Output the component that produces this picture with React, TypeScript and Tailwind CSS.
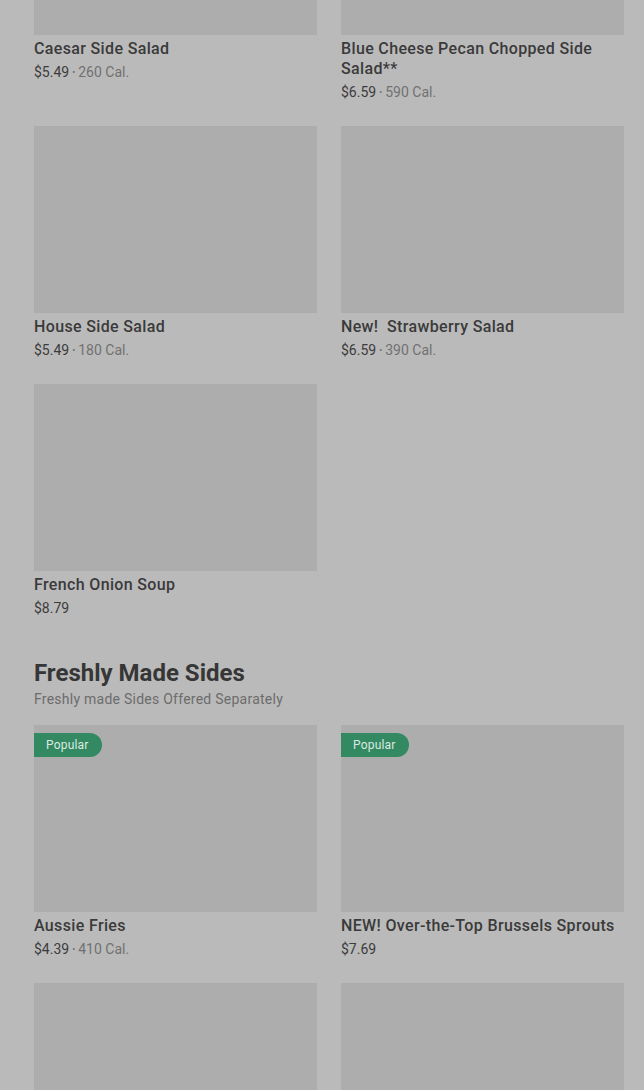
import React from "react";

type Item = { name: string; price: string; cal?: string; popular?: boolean };

const group1: Item[] = [
  { name: "Caesar Side Salad", price: "$5.49", cal: "260 Cal." },
  { name: "Blue Cheese Pecan Chopped Side Salad**", price: "$6.59", cal: "590 Cal." },
  { name: "House Side Salad", price: "$5.49", cal: "180 Cal." },
  { name: "New!  Strawberry Salad", price: "$6.59", cal: "390 Cal." },
  { name: "French Onion Soup", price: "$8.79" },
];

const group2: Item[] = [
  { name: "Aussie Fries", price: "$4.39", cal: "410 Cal.", popular: true },
  { name: "NEW! Over-the-Top Brussels Sprouts", price: "$7.69", popular: true },
  { name: "Loaded Mashed Potatoes", price: "$4.39" },
  { name: "Grilled Asparagus", price: "$4.39" },
];

function Card({ item }: { item: Item }) {
  return (
    <div className="flex flex-col">
      <div className="relative h-[187px] bg-[#adadad]">
        {item.popular && (
          <div className="absolute left-0 top-[8px] h-[24px] w-[68px] rounded-r-full bg-[#338a62] pl-[12px] text-[12px] leading-[24px] tracking-[0.2px] text-[#dbe9e0]">
            Popular
          </div>
        )}
      </div>
      <div className="mt-1 text-[16px] font-medium leading-5 tracking-[0.35px] text-[#3a3a3a] whitespace-pre-wrap">
        {item.name}
      </div>
      <div className="mt-1 flex h-[18px] items-center text-[14px] leading-[18px] text-[#3c3c3c]">
        <span>{item.price}</span>
        {item.cal && (
          <>
            <span className="mx-[3px] text-[9px] leading-[18px] text-[#6e6e6e]">•</span>
            <span className="text-[#717171]">{item.cal}</span>
          </>
        )}
      </div>
    </div>
  );
}

export default function App() {
  return (
    <div
      className="h-[1090px] overflow-hidden bg-[#bababa] pl-[34px] pr-[20px]"
      style={{ fontFamily: "Roboto, 'Liberation Sans', sans-serif" }}
    >
      <div className="-mt-[152px] grid grid-cols-2 gap-x-6 gap-y-[25px]">
        {group1.map((it) => (
          <Card key={it.name} item={it} />
        ))}
      </div>
      <h2 className="mt-[40px] text-[24px] font-bold leading-8 tracking-[0px] text-[#363636]">
        Freshly Made Sides
      </h2>
      <div className="text-[14px] leading-5 tracking-[0.25px] text-[#6c6c6c]">
        Freshly made Sides Offered Separately
      </div>
      <div className="mt-4 grid grid-cols-2 gap-x-6 gap-y-[25px]">
        {group2.map((it) => (
          <Card key={it.name} item={it} />
        ))}
      </div>
    </div>
  );
}
